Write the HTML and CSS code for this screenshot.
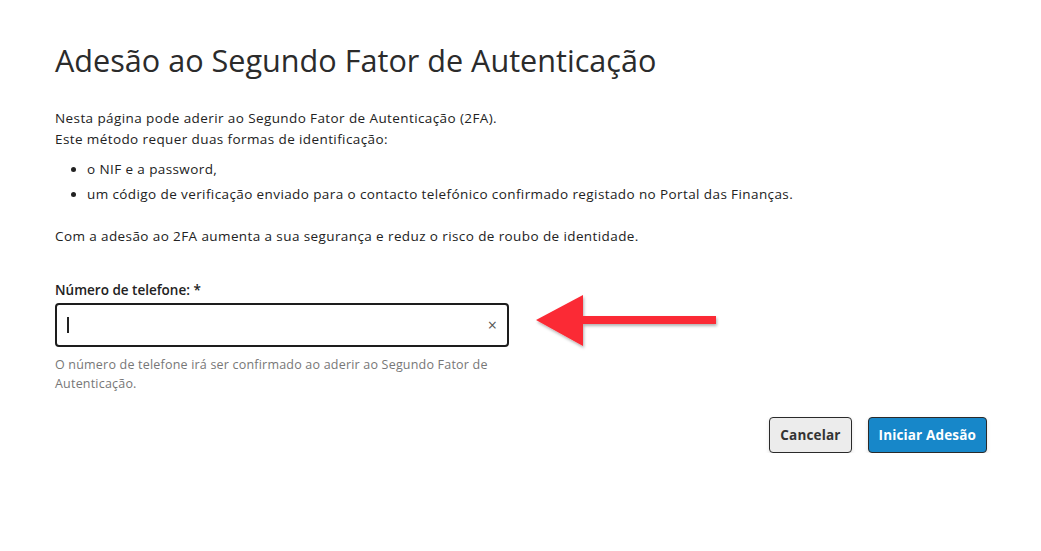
FILE: index.html
```html
<!DOCTYPE html>
<html lang="pt">
<head>
    <meta charset="UTF-8">
    <title>Adesão ao Segundo Fator de Autenticação</title>
    <link rel="stylesheet" href="styles.css">
</head>
<body>
    <div class="page">
        <h1 class="page-title">Adesão ao Segundo Fator de Autenticação</h1>

        <p class="intro">
            Nesta página pode aderir ao Segundo Fator de Autenticação (2FA).<br>
            Este método requer duas formas de identificação:
        </p>
        <ul class="methods">
            <li>o NIF e a password,</li>
            <li>um código de verificação enviado para o contacto telefónico confirmado registado no Portal das Finanças.</li>
        </ul>
        <p class="intro">Com a adesão ao 2FA aumenta a sua segurança e reduz o risco de roubo de identidade.</p>

        <div class="field">
            <label class="field-label" for="phone">Número de telefone: *</label>
            <div class="field-row">
                <div class="input-box">
                    <span class="caret"></span>
                    <input id="phone" type="text" class="phone-input">
                    <span class="clear">&times;</span>
                </div>
                <svg class="pointer" width="186" height="58" viewBox="0 0 186 58">
                    <defs>
                        <filter id="shade" x="-10%" y="-20%" width="130%" height="150%">
                            <feDropShadow dx="1" dy="2" stdDeviation="1.5" flood-color="#000" flood-opacity="0.3"/>
                        </filter>
                    </defs>
                    <polygon filter="url(#shade)" fill="#fb2a34"
                        points="2,26 49,1 49,22 182,22 182,30 49,30 49,52"/>
                </svg>
            </div>
            <p class="field-help">O número de telefone irá ser confirmado ao aderir ao Segundo Fator de Autenticação.</p>
        </div>

        <div class="actions">
            <button class="btn btn-cancel">Cancelar</button>
            <button class="btn btn-primary">Iniciar Adesão</button>
        </div>
    </div>
</body>
</html>
```

FILE: styles.css
```css
/* base */
body {
    margin: 0;
    background: #fff;
    color: #222;
    font-family: "Open Sans", "DejaVu Sans", sans-serif;
}

.page {
    width: 932px;
    padding: 38px 0 0 55px;
}

.page-title {
    margin: 0 0 26px;
    font-size: 30.6px;
    font-weight: 400;
    line-height: 44px;
    color: #2b2b2b;
}

.intro {
    margin: 0;
    font-size: 13.5px;
    letter-spacing: 0.4px;
    line-height: 21px;
}

.methods {
    margin: 7px 0 19px;
    padding-left: 32px;
    font-size: 13.5px;
    letter-spacing: 0.4px;
    line-height: 25px;
}

/* phone field */
.field {
    margin-top: 33px;
}

.field-label {
    display: block;
    font-size: 13.5px;
    font-weight: 600;
    line-height: 20px;
    margin-bottom: 3px;
}

.field-row {
    display: flex;
    align-items: center;
    gap: 25px;
}

.input-box {
    width: 430px;
    height: 40px;
    border: 2px solid #1d1d1d;
    border-radius: 4px;
    display: flex;
    align-items: center;
    padding: 0 10px 0 10px;
}

.caret {
    width: 2px;
    height: 16px;
    background: #222;
}

.phone-input {
    flex: 1;
    border: 0;
    outline: none;
    font: inherit;
    background: transparent;
}

.clear {
    font-size: 16px;
    color: #555;
    line-height: 1;
}

.pointer {
    margin: -7px 0 -7px;
    position: relative;
    top: -2px;
}

.field-help {
    width: 470px;
    margin: 8px 0 0;
    font-size: 12.5px;
    letter-spacing: 0.2px;
    line-height: 19px;
    color: #777;
}

/* buttons */
.actions {
    display: flex;
    justify-content: flex-end;
    gap: 16px;
    margin-top: 24px;
}

.btn {
    height: 36px;
    padding: 0 10px;
    border: 1px solid #2a2a2a;
    border-radius: 4px;
    font-family: inherit;
    font-size: 13.5px;
    letter-spacing: 0.15px;
    font-weight: 700;
    box-shadow: 0 2px 4px rgba(0, 0, 0, 0.12);
}

.btn-cancel {
    background: #ececec;
    color: #333;
}

.btn-primary {
    background: #1787c9;
    color: #fff;
}
```
